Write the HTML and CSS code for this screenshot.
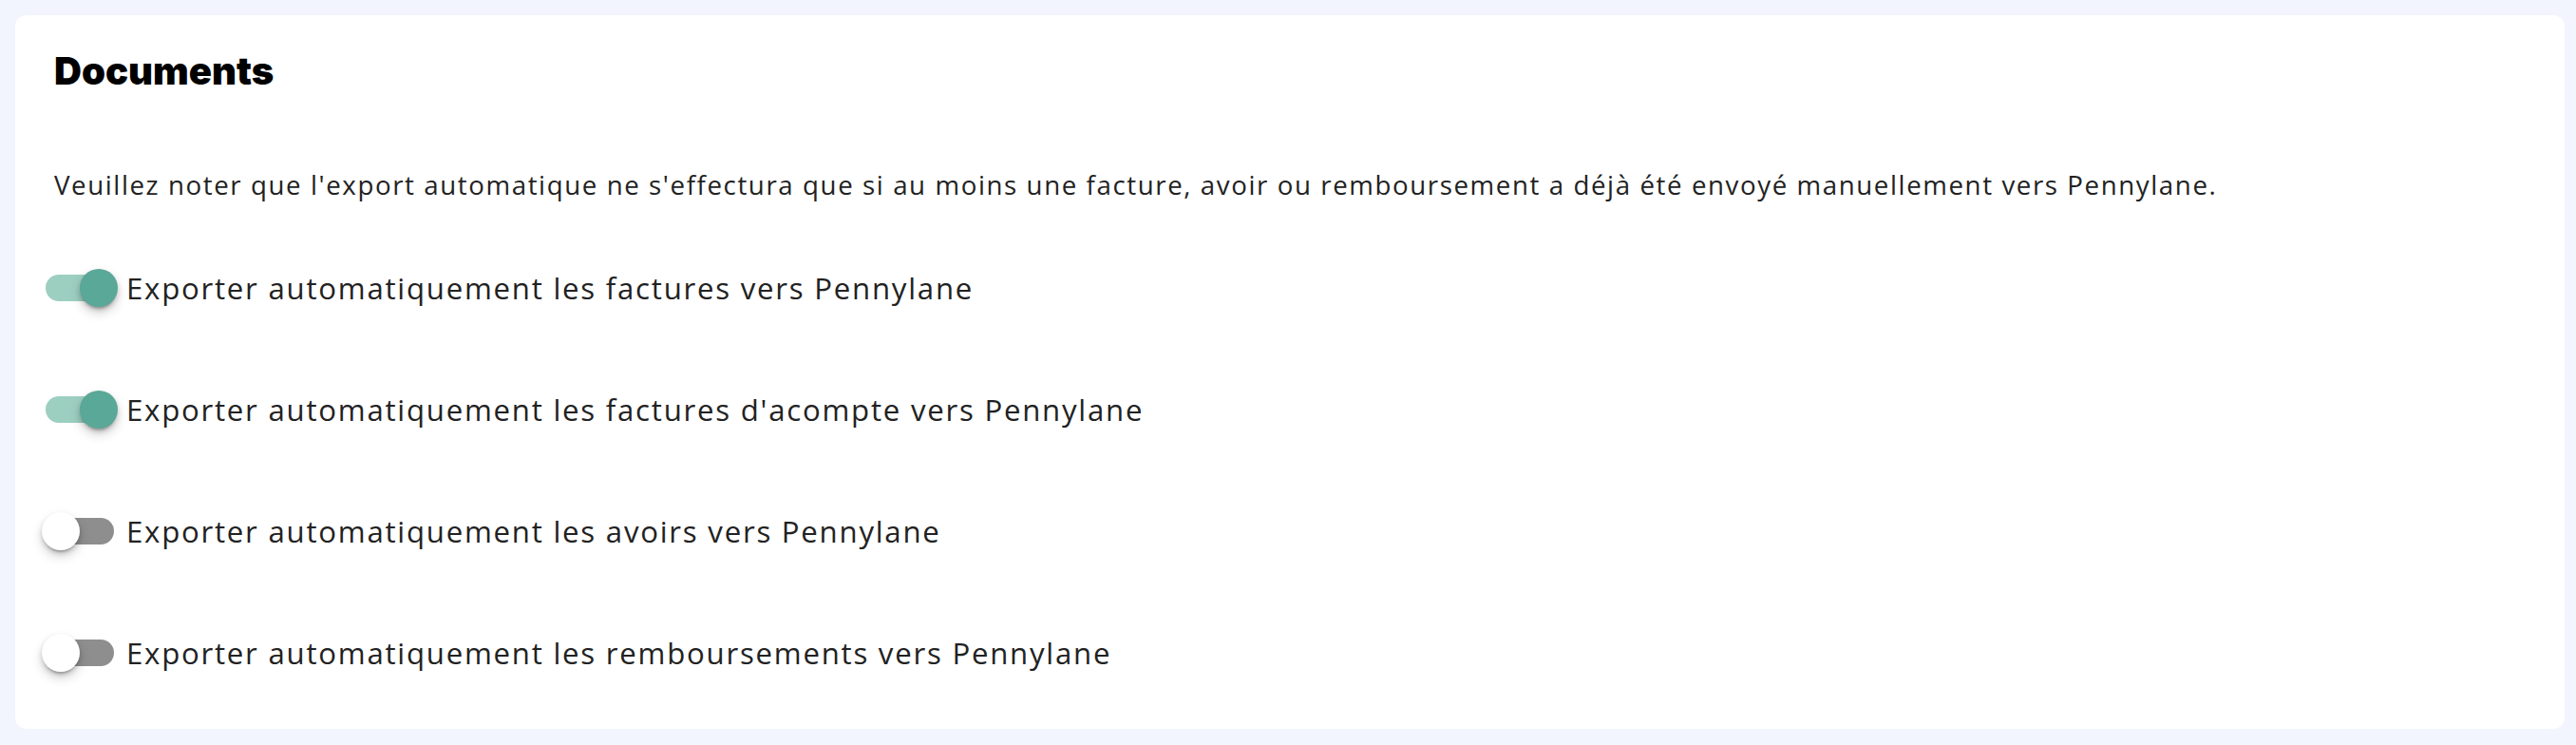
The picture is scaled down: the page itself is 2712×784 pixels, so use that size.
FILE: index.html
```html
<!DOCTYPE html>
<html lang="fr">
<head>
<meta charset="utf-8">
<title>Documents</title>
<link rel="stylesheet" href="styles.css">
</head>
<body>
<section class="card">
  <h2 class="title">Documents</h2>
  <p class="note">Veuillez noter que l'export automatique ne s'effectura que si au moins une facture, avoir ou remboursement a déjà été envoyé manuellement vers Pennylane.</p>
  <div class="options">
    <label class="option">
      <span class="switch on"><span class="track"></span><span class="thumb"></span></span>
      <span class="label">Exporter automatiquement les factures vers Pennylane</span>
    </label>
    <label class="option">
      <span class="switch on"><span class="track"></span><span class="thumb"></span></span>
      <span class="label">Exporter automatiquement les factures d'acompte vers Pennylane</span>
    </label>
    <label class="option">
      <span class="switch"><span class="track"></span><span class="thumb"></span></span>
      <span class="label">Exporter automatiquement les avoirs vers Pennylane</span>
    </label>
    <label class="option">
      <span class="switch"><span class="track"></span><span class="thumb"></span></span>
      <span class="label">Exporter automatiquement les remboursements vers Pennylane</span>
    </label>
  </div>
</section>
</body>
</html>
```
FILE: styles.css
```css
html, body {
  margin: 0;
  padding: 0;
}
body {
  background: #f2f5fd;
  font-family: "Open Sans", "Noto Sans", sans-serif;
  color: #222222;
  padding: 16px 12px 17px 16px;
}
.card {
  background: #ffffff;
  border-radius: 12px;
  padding: 35px 41px 60px 41px;
  box-sizing: border-box;
  height: 751px;
}
.title {
  margin: 0;
  font-family: "Inter", sans-serif;
  font-weight: 900;
  font-size: 40px;
  line-height: 48px;
  color: #000000;
}
.note {
  margin: 77px 0 0 0;
  font-size: 27.7px;
  line-height: 36px;
  letter-spacing: 1.58px;
  white-space: nowrap;
}
.options {
  display: flex;
  flex-direction: column;
  gap: 88px;
  margin-top: 71px;
}
.option {
  display: flex;
  align-items: center;
  height: 40px;
}
.switch {
  position: relative;
  flex: none;
  width: 80px;
  height: 40px;
  margin-left: -13px;
  margin-right: 9px;
}
.track {
  position: absolute;
  left: 4px;
  top: 6px;
  width: 72px;
  height: 28px;
  border-radius: 14px;
  background: #8e8e8e;
}
.switch.on .track {
  background: #9dcfc1;
}
.thumb {
  position: absolute;
  top: 0;
  left: 0;
  width: 40px;
  height: 40px;
  border-radius: 50%;
  background: #ffffff;
  box-shadow: 0 4px 2px -2px rgba(0,0,0,0.18), 0 3px 5px 0 rgba(0,0,0,0.14), 0 6px 12px 0 rgba(0,0,0,0.18);
}
.switch.on .thumb {
  left: 40px;
  background: #5aa897;
}
.label {
  font-size: 31.2px;
  line-height: 40px;
  letter-spacing: 1.75px;
  white-space: nowrap;
}
```
